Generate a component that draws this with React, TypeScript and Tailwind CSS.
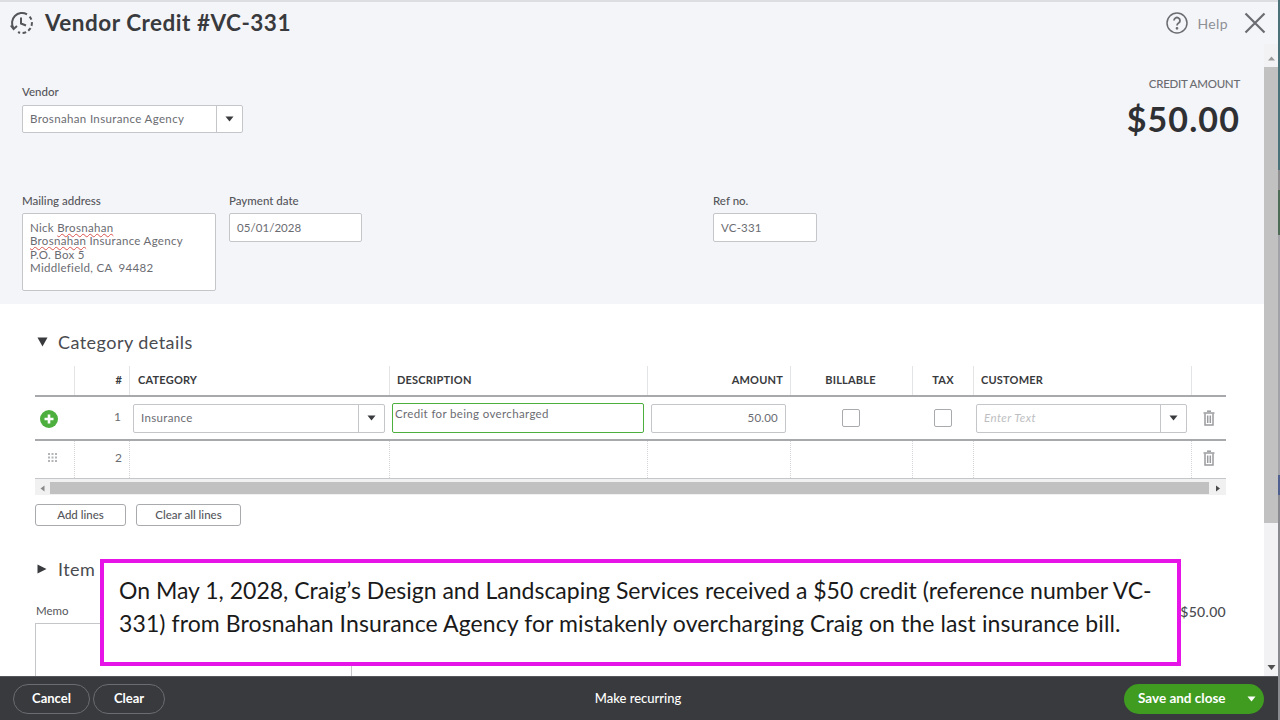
import React from "react";

function Caret({ className = "" }: { className?: string }) {
  return (
    <svg width="9" height="6" viewBox="0 0 9 6" className={className}>
      <path d="M0.5 0.5h8L4.5 5.5z" fill="#393a3d" />
    </svg>
  );
}

function Select({ w, value, placeholder, h = "h-[29px]" }: { w: string; value?: string; placeholder?: string; h?: string }) {
  return (
    <div className={`${w} ${h} flex bg-white border border-[#c4c6ca] rounded-[2px]`}>
      <div className="flex-1 flex items-center pl-[7px] text-[11.5px] tracking-[0.35px] text-[#6b6c72]">
        {value}
        {placeholder && <span className="italic text-[#bdbec2] tracking-[0.45px]">{placeholder}</span>}
      </div>
      <div className="w-[26px] border-l border-[#c4c6ca] flex items-center justify-center">
        <Caret />
      </div>
    </div>
  );
}

function Trash() {
  return (
    <svg width="12" height="16" viewBox="0 0 12 16" fill="none" stroke="#9a9b9e" strokeWidth="1.5">
      <path d="M0.5 3h11" />
      <path d="M4 1.2h4" />
      <path d="M2 3.5v11.5h8V3.5" />
      <path d="M4.7 5.5v7.5M7.3 5.5v7.5" />
    </svg>
  );
}

function Grip() {
  return (
    <svg width="10" height="10" viewBox="0 0 10 10" fill="#b4b5b8">
      {[0, 3.5, 7].map((y) =>
        [0, 3.5, 7].map((x) => <rect key={`${x}-${y}`} x={x} y={y} width="2" height="2" />)
      )}
    </svg>
  );
}

const gridCols = "grid grid-cols-[40px_55px_260px_258px_143px_122px_61px_218px_34px]";

function HeadCell({ children, className = "" }: { children?: React.ReactNode; className?: string }) {
  return (
    <div className={`flex items-center border-r border-[#e3e4e6] text-[11px] font-bold tracking-[0.2px] text-[#393a3d] ${className}`}>
      {children}
    </div>
  );
}

function BodyCell({ children, className = "" }: { children?: React.ReactNode; className?: string }) {
  return <div className={`flex items-center border-r border-dotted border-[#d4d5d8] ${className}`}>{children}</div>;
}

export default function App() {
  return (
    <div className="relative w-[1280px] h-[720px] overflow-hidden flex bg-white font-['Lato','Open_Sans',sans-serif] text-[#393a3d]">
      <div className="w-[1278px] flex flex-col">
        <div className="h-[2px] bg-[#dddee1]" />
        <div className="bg-[#f4f5f8] h-[42px] flex items-center">
          <svg width="24" height="24" viewBox="0 0 24 24" fill="none" stroke="#55565b" strokeWidth="2" className="ml-[10px] mr-[11px]">
            <path d="M3.5 17.2A10 10 0 0 1 17 3.3" />
            <path d="M19.6 5.6A10 10 0 0 1 8 21.2" strokeDasharray="3.6 2.4" />
            <path d="M0.8 14.5l2.8 3.6 3.4-3" />
            <path d="M11 6.5v6l5 2" />
          </svg>
          <span className="text-[22.5px] font-bold tracking-[0.5px] text-[#393a3d]">Vendor Credit #VC-331</span>
          <div className="ml-auto flex items-center mr-[12px]">
            <svg width="22" height="22" viewBox="0 0 22 22" fill="none" stroke="#6b6c72" strokeWidth="1.5">
              <circle cx="11" cy="11" r="10" />
              <path d="M8 8.6a3 3 0 1 1 4.6 2.5c-1 .6-1.6 1.2-1.6 2.4" strokeWidth="1.8" />
              <circle cx="11" cy="16.3" r="0.6" fill="#6b6c72" />
            </svg>
            <span className="ml-[9px] mr-[16px] text-[14px] tracking-[0.4px] text-[#8d9096]">Help</span>
            <svg width="22" height="22" viewBox="0 0 22 22" fill="none" stroke="#6b6c72" strokeWidth="2.2">
              <path d="M1.5 1.5l19 19M20.5 1.5l-19 19" />
            </svg>
          </div>
        </div>

        <div className="flex-1 min-h-0 flex">
          <div className="flex-1 min-w-0 flex flex-col">
            <div className="bg-[#f4f5f8] h-[260px] pl-[22px] pr-[24px] flex flex-col">
              <div className="flex justify-between h-[150px]">
                <div className="pt-[41px]">
                  <div className="text-[11.5px] font-medium text-[#55565b] leading-[14px] mb-[6px]">Vendor</div>
                  <Select w="w-[221px]" h="h-[28px]" value="Brosnahan Insurance Agency" />
                </div>
                <div className="pt-[33px] flex flex-col items-end">
                  <div className="text-[11.5px] font-medium tracking-[-0.25px] text-[#6b6c72] leading-[14px]">CREDIT AMOUNT</div>
                  <div className="text-[34px] font-bold tracking-[1.1px] text-[#2f3033] leading-[40px] mt-[8px]">$50.00</div>
                </div>
              </div>
              <div className="flex">
                <div className="w-[207px]">
                  <div className="text-[11.5px] font-medium text-[#55565b] leading-[14px] mb-[5px]">Mailing address</div>
                  <div className="w-[194px] h-[78px] bg-white border border-[#c4c6ca] rounded-[2px] pl-[7px] pt-[7px] text-[11.5px] leading-[13.4px] tracking-[0.3px] text-[#6b6c72]">
                    <div>
                      Nick <span className="underline decoration-wavy decoration-[#d9534f] decoration-[1px] underline-offset-[1px]">Brosnahan</span>
                    </div>
                    <div>
                      <span className="underline decoration-wavy decoration-[#d9534f] decoration-[1px] underline-offset-[1px]">Brosnahan</span> Insurance Agency
                    </div>
                    <div>P.O. Box 5</div>
                    <div>Middlefield, CA&nbsp; 94482</div>
                  </div>
                </div>
                <div className="w-[484px]">
                  <div className="text-[11.5px] font-medium text-[#55565b] leading-[14px] mb-[5px]">Payment date</div>
                  <div className="w-[133px] h-[29px] bg-white border border-[#c4c6ca] rounded-[2px] pl-[7px] flex items-center text-[11.5px] tracking-[0.05px] text-[#6b6c72]">05/01/2028</div>
                </div>
                <div>
                  <div className="text-[11.5px] font-medium text-[#55565b] leading-[14px] mb-[5px]">Ref no.</div>
                  <div className="w-[104px] h-[29px] bg-white border border-[#c4c6ca] rounded-[2px] pl-[7px] flex items-center text-[11.5px] tracking-[0.2px] text-[#6b6c72]">VC-331</div>
                </div>
              </div>
            </div>

            <div className="pl-[35px] pr-[38px] flex-1 min-h-0 flex flex-col">
              <div className="flex items-center h-[24px] mt-[26px]">
                <svg width="11" height="10" viewBox="0 0 11 10" className="ml-[2px]">
                  <path d="M0.5 0.5h10L5.5 9.5z" fill="#393a3d" />
                </svg>
                <span className="ml-[10px] text-[18px] tracking-[0.45px] text-[#4a4b50]">Category details</span>
              </div>

              <div className={`${gridCols} h-[29px] mt-[12px]`}>
                <HeadCell />
                <HeadCell className="justify-end pr-[7px]">#</HeadCell>
                <HeadCell className="pl-[8px]">CATEGORY</HeadCell>
                <HeadCell className="pl-[7px]">DESCRIPTION</HeadCell>
                <HeadCell className="justify-end pr-[7px]">AMOUNT</HeadCell>
                <HeadCell className="justify-center pr-[2px]">BILLABLE</HeadCell>
                <HeadCell className="justify-center">TAX</HeadCell>
                <HeadCell className="pl-[7px]">CUSTOMER</HeadCell>
                <div />
              </div>
              <div className="h-[2px] bg-[#a8a9ac]" />

              <div className={`${gridCols} h-[42px]`}>
                <div className="flex items-center justify-center">
                  <svg width="18" height="18" viewBox="0 0 18 18" className="ml-[-13px] mt-[1px]">
                    <circle cx="9" cy="9" r="9" fill="#4caf3e" />
                    <path d="M9 4.5v9M4.5 9h9" stroke="#fff" strokeWidth="2.6" />
                  </svg>
                </div>
                <div className="flex items-center justify-end pr-[9px] pb-[2px] text-[12px] text-[#6b6c72]">1</div>
                <div className="flex items-center pl-[3px]">
                  <Select w="w-[252px]" value="Insurance" />
                </div>
                <div className="flex items-center pl-[2px]">
                  <div className="w-[252px] h-[30px] bg-white border border-[#4caf3e] rounded-[2px] pl-[2px] text-[11.5px] leading-[19px] tracking-[0.35px] text-[#6b6c72]">Credit for being overcharged</div>
                </div>
                <div className="flex items-center pl-[3px]">
                  <div className="w-[135px] h-[29px] bg-white border border-[#c4c6ca] rounded-[2px] flex items-center justify-end pr-[7px] text-[11.5px] tracking-[0.2px] text-[#6b6c72]">50.00</div>
                </div>
                <div className="flex items-center justify-center pr-[2px]">
                  <div className="w-[18px] h-[18px] bg-white border border-[#a9aaad] rounded-[2px]" />
                </div>
                <div className="flex items-center justify-center pr-[2px]">
                  <div className="w-[18px] h-[18px] bg-white border border-[#a9aaad] rounded-[2px]" />
                </div>
                <div className="flex items-center pl-[2px]">
                  <Select w="w-[211px]" placeholder="Enter Text" />
                </div>
                <div className="flex items-center justify-center">
                  <Trash />
                </div>
              </div>
              <div className="h-[2px] bg-[#a8a9ac]" />

              <div className={`${gridCols} h-[37px]`}>
                <BodyCell className="justify-center pr-[3px] pb-[3px]">
                  <Grip />
                </BodyCell>
                <BodyCell className="justify-end pr-[7px] pb-[3px] text-[12px] text-[#6b6c72]">2</BodyCell>
                <BodyCell />
                <BodyCell />
                <BodyCell />
                <BodyCell />
                <BodyCell />
                <BodyCell />
                <div className="flex items-center justify-center pb-[3px]">
                  <Trash />
                </div>
              </div>
              <div className="h-[1px] bg-[#c4c6ca]" />

              <div className="h-[16px] pt-[2px] flex items-center bg-[#f1f1f1]">
                <svg width="15" height="13" viewBox="0 0 15 13" className="shrink-0"><path d="M9.5 3.5v6l-4-3z" fill="#8a8a8a" /></svg>
                <div className="flex-1 h-[12px] bg-[#c1c1c1]" />
                <svg width="17" height="13" viewBox="0 0 17 13" className="shrink-0"><path d="M7 3.5v6l4-3z" fill="#4a4a4a" /></svg>
              </div>

              <div className="flex gap-[10px] mt-[9px]">
                <div className="w-[91px] h-[22px] border border-[#a9aaad] rounded-[3px] flex items-center justify-center text-[11.5px] font-medium text-[#55565b]">Add lines</div>
                <div className="w-[105px] h-[22px] border border-[#a9aaad] rounded-[3px] flex items-center justify-center text-[11.5px] font-medium text-[#55565b]">Clear all lines</div>
              </div>

              <div className="flex items-center h-[24px] mt-[31px]">
                <svg width="10" height="10" viewBox="0 0 10 10" className="ml-[2px]">
                  <path d="M0.5 0.5v9l9-4.5z" fill="#393a3d" />
                </svg>
                <span className="ml-[11px] text-[18px] tracking-[0.45px] text-[#4a4b50]">Item details</span>
              </div>

              <div className="flex justify-between mt-[23px]">
                <div className="text-[11.5px] text-[#55565b] leading-[14px] ml-[1px]">Memo</div>
                <div className="text-[14px] font-medium tracking-[0.3px] text-[#4a4b50] leading-[14px] mt-[1px]">$50.00</div>
              </div>
              <div className="w-[317px] flex-1 mt-[4px] border border-b-0 border-[#c4c6ca]" />
            </div>
          </div>

          <div className="w-[14px] bg-[#f2f2f4] flex flex-col items-center">
            <svg width="9" height="23" viewBox="0 0 9 23" className="shrink-0"><path d="M1 16.5h7L4.5 12.5z" fill="#9a9a9a" /></svg>
            <div className="w-[14px] h-[456px] bg-[#c1c1c1] shrink-0" />
            <div className="flex-1" />
            <svg width="9" height="16" viewBox="0 0 9 16" className="shrink-0"><path d="M0.5 5h8L4.5 10z" fill="#505050" /></svg>
          </div>
        </div>

        <div className="h-[44px] bg-[#393a3d] border-t border-[#55565b] flex items-center pl-[13px] pr-[14px]">
          <div className="w-[77px] h-[30px] border border-[#6b6c72] rounded-full flex items-center justify-center text-[13px] font-bold text-white">Cancel</div>
          <div className="w-[72px] h-[30px] ml-[3px] border border-[#6b6c72] rounded-full flex items-center justify-center text-[13px] font-bold text-white">Clear</div>
          <div className="flex-1 flex justify-center pr-[13px] text-[13px] font-medium text-white">Make recurring</div>
          <div className="w-[140px] h-[30px] bg-[#3f9c20] rounded-full flex items-center pl-[14px] text-[13.5px] font-bold text-white">
            Save and close
            <svg width="9" height="6" viewBox="0 0 9 6" className="ml-auto mr-[8px]"><path d="M0.5 0.5h8L4.5 5.5z" fill="#fff" /></svg>
          </div>
        </div>
      </div>

      <div className="w-[2px] flex flex-col">
        <div className="h-[170px] bg-[#4a7278]" />
        <div className="h-[20px] bg-[#8d8d8f]" />
        <div className="h-[45px] bg-[#4d6b55]" />
        <div className="h-[240px] bg-[#a2a3a8]" />
        <div className="h-[20px] bg-[#4f5f8f]" />
        <div className="flex-1 bg-[#8a8b90]" />
      </div>

      <div className="absolute left-[100px] top-[559px] w-[1081px] h-[107px] bg-white border-[4px] border-[#e614e6] pl-[15px] pt-[11px] text-[23px] leading-[33px] whitespace-nowrap text-[#1a1a1a]">
        On May 1, 2028, Craig’s Design and Landscaping Services received a $50 credit (reference number VC-
        <br />
        <span className="tracking-[0.1px]">331) from Brosnahan Insurance Agency for mistakenly overcharging Craig on the last insurance bill.</span>
      </div>
    </div>
  );
}
